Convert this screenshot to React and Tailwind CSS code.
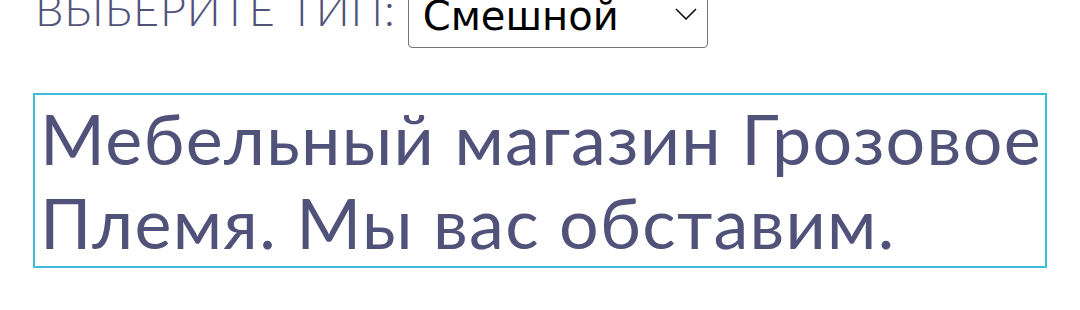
import React from 'react';

const App = () => {
  return (
    <div className="w-[1080px] h-[310px] bg-white overflow-hidden" style={{ fontFamily: 'Lato, sans-serif' }}>
      <div className="-mt-[20px] px-[35px] flex items-end gap-[12px]">
        <label className="text-[45px] font-light leading-[48px] text-[#50527a] tracking-[0.9px] mb-[14px]">ВЫБЕРИТЕ ТИП:</label>
        <div className="relative w-[300px] h-[68px] mb-[-1px]">
          <select
            defaultValue="funny"
            className="appearance-none w-full h-full bg-white border border-[#767676] rounded-[4px] pl-[14px] pr-[40px] pt-[4px] text-[40px] text-black leading-none outline-none"
            style={{ fontFamily: '"DejaVu Sans", sans-serif' }}
          >
            <option value="funny">Смешной</option>
            <option value="sad">Грустный</option>
          </select>
          <svg className="absolute right-[11px] top-[28px] pointer-events-none" width="22" height="12" viewBox="0 0 22 12" fill="none">
            <path d="M1 1L11 11L21 1" stroke="#111" strokeWidth="1.6" />
          </svg>
        </div>
      </div>

      <div className="mx-[33px] mt-[46px] border-2 border-[#3dbdd9] pl-[5px] pr-[2px] pt-[1px] pb-[2px]">
        <p className="text-[70px] leading-[84px] text-[#50527a] tracking-[1.3px]">
          Мебельный магазин Грозовое Племя. Мы вас обставим.
        </p>
      </div>
    </div>
  );
};

export default App;
